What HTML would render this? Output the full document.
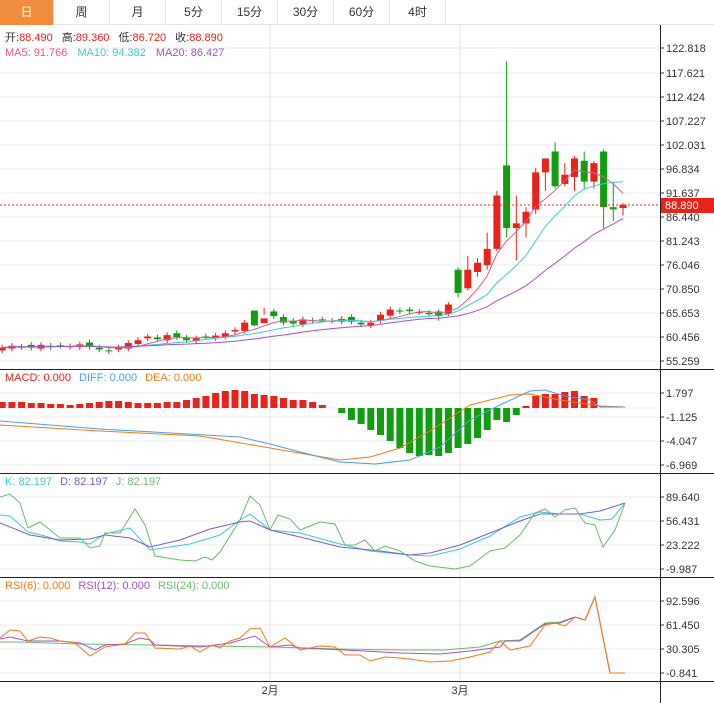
<!DOCTYPE html>
<html><head><meta charset="utf-8">
<style>
*{margin:0;padding:0;box-sizing:border-box}
body{width:714px;height:703px;background:#fff;overflow:hidden;font-family:"Liberation Sans","Noto Sans CJK SC",sans-serif;position:relative}
.tabs{position:absolute;left:0;top:0;width:714px;height:25px;border-bottom:1px solid #e4e4e4;display:flex}
.tabs div{width:56px;height:25px;line-height:24px;text-align:center;font-size:12px;color:#333;border-right:1px solid #e4e4e4}
.tabs div.on{background:#f08c3c;color:#fff;width:54px}
svg{position:absolute;left:0;top:0}
</style></head><body>
<div class="tabs"><div class="on">日</div><div>周</div><div>月</div><div>5分</div><div>15分</div><div>30分</div><div>60分</div><div>4时</div></div>
<svg id="s" width="714" height="703" style="top:0">
<g font-size="11" fill="#333" id="lab"></g>
</svg>
<script>
var s=document.getElementById('s'),NS='http://www.w3.org/2000/svg',out='';
function L(x1,y1,x2,y2,c,w,d){out+='<line x1="'+x1+'" y1="'+y1+'" x2="'+x2+'" y2="'+y2+'" stroke="'+c+'" stroke-width="'+(w||1)+'"'+(d?' stroke-dasharray="'+d+'"':'')+'/>';}
function R(x,y,w,h,c){out+='<rect x="'+x+'" y="'+y+'" width="'+w+'" height="'+h+'" fill="'+c+'"/>';}
function P(pts,c){out+='<polyline fill="none" stroke="'+c+'" stroke-width="1" points="'+pts.map(function(p){return p[0]+','+p[1]}).join(' ')+'"/>';}
function T(x,y,t,c,a){out+='<text x="'+x+'" y="'+y+'" fill="'+(c||'#333')+'" font-size="11"'+(a?' text-anchor="'+a+'"':'')+'>'+t+'</text>';}
var GR='#ebebeb';
// main grid
var ml=[[48,'122.818'],[73,'117.621'],[97,'112.424'],[121,'107.227'],[145,'102.031'],[169,'96.834'],[193,'91.637'],[217,'86.440'],[241,'81.243'],[265,'76.046'],[289,'70.850'],[313,'65.653'],[337,'60.456'],[361,'55.259']];
ml.forEach(function(m){L(0,m[0],660,m[0],GR);L(660,m[0],664,m[0],'#333');T(666,m[0]+4,m[1]);});
var pl=[[393,'1.797'],[417,'-1.125'],[441,'-4.047'],[465,'-6.969'],[497,'89.640'],[521,'56.431'],[545,'23.222'],[569,'-9.987'],[601,'92.596'],[625,'61.450'],[649,'30.305'],[673,'-0.841']];
pl.forEach(function(m){L(0,m[0],660,m[0],GR);L(660,m[0],664,m[0],'#333');T(666,m[0]+4,m[1]);});
L(270,25,270,681,'#e6e6e6');L(460,25,460,681,'#e6e6e6');
// candles
function py(p){return 48+(122.818-p)*4.637;}
var c=[58.2,58.6,58.4,58.2,58.8,58.3,58.6,58.5,58.9,58.4,57.8,57.4,58.2,59.2,59.8,60.6,60.0,60.9,60.5,59.8,60.2,60.5,60.8,61.3,62.0,63.6,65.5,66.2,65.0,63.6,63.4,64.3,63.9,64.2,64.0,64.4,63.8,63.2,63.6,65.3,66.4,66.0,66.1,65.9,65.4];
var C=[];var o=[];
for(var i=0;i<c.length;i++){var op=i==0?57.6:c[i-1]+((i%3==0)?0.4:-0.2);C.push([op,c[i],Math.max(op,c[i])+0.6,Math.min(op,c[i])-0.6]);}
C[26][0]=66.2;C[26][1]=63.0;C[27][0]=63.5;C[27][1]=64.5;
var late=[[66,65,66.5,64],[65.5,67.5,68,65],[75,70,75.5,69],[71,75,78,70.5],[74.5,76.5,77.5,73.5],[76,79.5,83,75],[79.5,91,92,79],[97.5,84,120,82],[84,85,91,77],[85,87.5,88.5,82],[88,96,97,87],[96,99,99,92],[100.5,93,102.5,92.5],[93.5,95.5,98,93],[95,99,99.5,92],[98.5,94,100.5,92.5],[94,98,98.5,92.5],[100.5,88.5,101,84],[88.5,88,94,85.5],[88.3,89,89.4,86.7]];
C=C.concat(late);
var cl=C.map(function(d){return d[1]});
function xk(k){return 623-9.7*(64-k);}
C.forEach(function(d,k){var x=xk(k),up=d[1]>=d[0],col=up?'#e8231c':'#119c11';L(x,py(d[2]),x,py(d[3]),col);var t=py(Math.max(d[0],d[1])),b=py(Math.min(d[0],d[1]));R(x-3.5,t,7,Math.max(1,b-t),col);});
function ma(n,col){var pts=[];for(var k=0;k<cl.length;k++){var a=0,m=Math.min(n,k+1);for(var j=0;j<m;j++)a+=cl[k-j];pts.push([xk(k),py(a/m)]);}P(pts,col);}
ma(5,'#e05a8a');ma(10,'#3ec8d8');ma(20,'#a64fc8');
L(0,205,660,205,'#e8231c',1,'2,2');R(661,198,53,15,'#e8231c');T(665,209,'88.890','#fff');
// MACD
var h=[6,6,6,5,5,4,4,3,4,5,6,7,7,6,5,5,5,6,6,8,10,12,15,17,18,17,14,13,12,10,8,8,6,3,0,-5,-12,-16,-22,-27,-33,-40,-45,-48,-47,-48,-45,-40,-36,-30,-22,-12,-14,-7,2,12,14,14,16,17,12,10,0,0,0];
L(0,408,660,408,'#cfe4ef',1,'2,2');
h.forEach(function(v,k){var x=xk(k);if(v>0)R(x-3.5,408-v,7,v,'#e8231c');else if(v<0)R(x-3.5,408,7,-v,'#119c11');});
P([[0,425],[100,431],[200,436],[270,448],[340,460],[370,457],[400,448],[430,431],[470,405],[510,395],[530,394],[560,400],[600,406],[625,407]],'#f07a1a');
P([[0,421],[100,429],[240,437],[270,444],[300,452],[340,462],[375,464],[410,460],[440,447],[470,420],[500,405],[530,391],[545,390],[565,396],[590,400],[600,407],[625,407]],'#4aa0e0');
// KDJ
P([[0,515],[10,516],[28,532],[45,536],[60,541],[80,542],[90,544],[105,534],[130,528],[150,550],[190,544],[220,535],[240,520],[250,514],[270,530],[300,533],[340,544],[370,551],[410,555],[430,556],[460,549],[490,536],[520,517],[540,512],[560,514],[580,514],[600,520],[612,519],[625,503]],'#3ec8d8');
P([[0,523],[30,535],[60,540],[90,539],[105,535],[130,538],[150,547],[180,540],[210,529],[240,522],[250,521],[270,530],[300,537],[340,547],[380,551],[410,555],[430,553],[460,545],[490,533],[520,521],[540,514],[580,514],[600,511],[625,503]],'#7a5cc8');
P([[0,497],[10,494],[20,503],[28,528],[40,522],[50,530],[60,538],[80,538],[90,548],[100,546],[105,533],[120,533],[135,509],[145,525],[155,556],[180,560],[195,561],[205,557],[212,560],[220,552],[240,520],[250,496],[260,505],[270,530],[278,515],[290,519],[300,530],[320,522],[335,524],[345,545],[355,545],[365,540],[375,551],[385,546],[400,551],[415,561],[430,566],[455,569],[470,566],[490,551],[505,548],[520,535],[535,513],[545,509],[555,517],[565,510],[575,508],[585,523],[595,525],[603,547],[615,530],[625,503]],'#6cb86c');
// RSI
P([[0,642],[20,642],[80,644],[150,645],[270,647],[340,649],[400,650],[445,650],[480,647],[500,641],[520,640],[545,623],[560,622],[575,617],[585,620],[595,597],[610,673],[625,673]],'#6cb86c');
P([[0,639],[10,637],[28,641],[60,641],[80,643],[95,650],[105,645],[125,644],[140,638],[150,640],[155,645],[200,647],[230,643],[255,636],[270,647],[290,645],[300,648],[345,650],[400,653],[440,654],[470,651],[500,647],[505,641],[520,641],[545,624],[560,623],[575,617],[585,620],[595,597],[610,673],[625,673]],'#a64fc8');
P([[0,638],[10,630],[20,631],[28,641],[40,637],[50,638],[60,641],[75,643],[90,656],[105,647],[125,644],[135,633],[145,633],[155,648],[180,649],[190,646],[200,652],[212,645],[220,648],[230,641],[240,638],[250,629],[260,628],[270,647],[285,638],[300,650],[320,646],[335,647],[345,655],[360,655],[370,661],[385,657],[400,658],[410,659],[430,662],[450,661],[470,657],[490,652],[500,641],[510,650],[530,646],[545,625],[555,623],[565,626],[575,617],[585,620],[595,597],[610,673],[625,673]],'#f07a1a');
// frame
[369,473,577,681].forEach(function(y){L(0,y+.5,714,y+.5,'#222');});
L(660.5,25,660.5,703,'#222');
T(270,694,'2月','#333','middle');T(460,694,'3月','#333','middle');
// legends
out+='<text y="41" font-size="11"><tspan x="5" fill="#333">开:</tspan><tspan fill="#e8231c">88.490</tspan><tspan dx="9" fill="#333">高:</tspan><tspan fill="#e8231c">89.360</tspan><tspan dx="9" fill="#333">低:</tspan><tspan fill="#e8231c">86.720</tspan><tspan dx="9" fill="#333">收:</tspan><tspan fill="#e8231c">88.890</tspan></text>';
out+='<text y="56" font-size="11"><tspan x="5" fill="#e05a8a">MA5: 91.766</tspan><tspan dx="10" fill="#3ec8d8">MA10: 94.382</tspan><tspan dx="10" fill="#a64fc8">MA20: 86.427</tspan></text>';
out+='<text y="381" font-size="11"><tspan x="5" fill="#e8231c">MACD: 0.000</tspan><tspan dx="8" fill="#4aa0e0">DIFF: 0.000</tspan><tspan dx="8" fill="#f07a1a">DEA: 0.000</tspan></text>';
out+='<text y="485" font-size="11"><tspan x="5" fill="#3ec8d8">K: 82.197</tspan><tspan dx="8" fill="#7a5cc8">D: 82.197</tspan><tspan dx="8" fill="#6cb86c">J: 82.197</tspan></text>';
out+='<text y="589" font-size="11"><tspan x="5" fill="#f07a1a">RSI(6): 0.000</tspan><tspan dx="8" fill="#a64fc8">RSI(12): 0.000</tspan><tspan dx="8" fill="#6cb86c">RSI(24): 0.000</tspan></text>';
s.innerHTML=out;
</script>
</body></html>
